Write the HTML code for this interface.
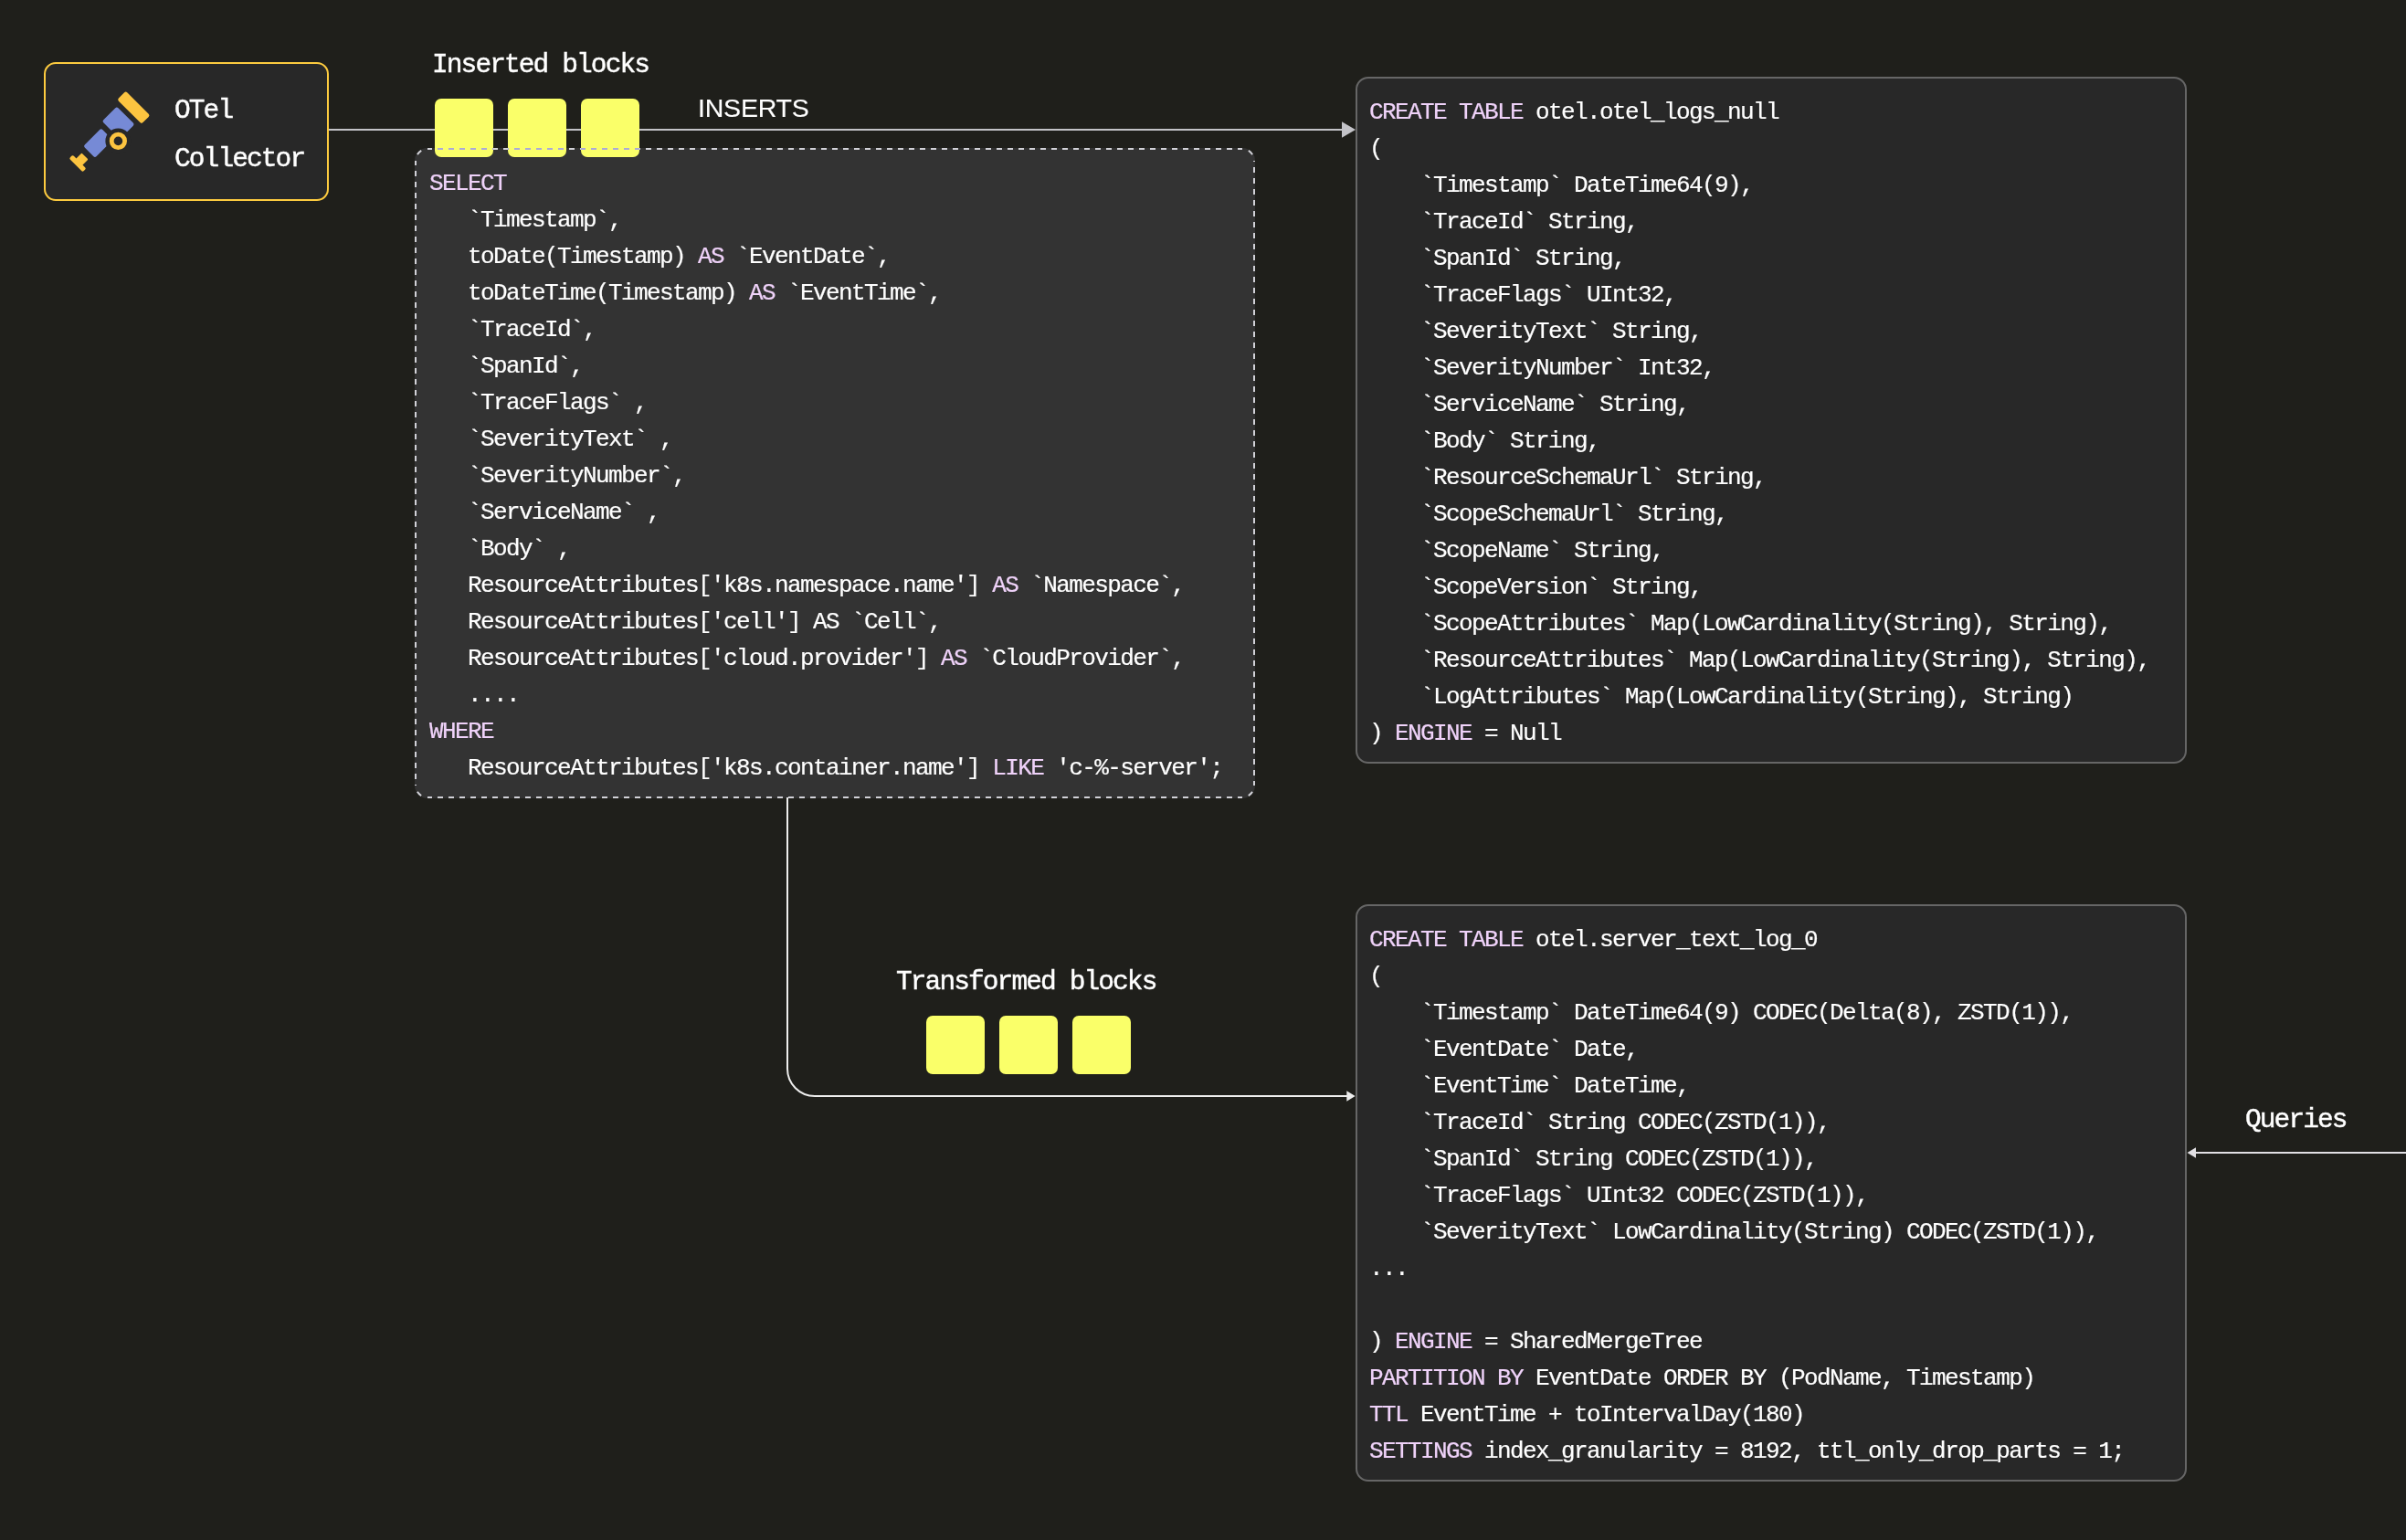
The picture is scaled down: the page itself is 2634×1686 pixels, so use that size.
<!DOCTYPE html>
<html><head><meta charset="utf-8">
<style>
html,body{margin:0;padding:0;}
body{width:2634px;height:1686px;background:#1f1f1b;position:relative;overflow:hidden;font-family:"Liberation Mono",monospace;color:#fff;}
svg{position:absolute;left:0;top:0;}
.lbl{position:absolute;font-family:"Liberation Mono",monospace;font-size:29.5px;letter-spacing:-1.9px;line-height:32px;white-space:pre;color:#fff;-webkit-text-stroke:0.45px #fff;}
.code{position:absolute;font-family:"Liberation Mono",monospace;font-size:26px;letter-spacing:-1.6px;line-height:40px;white-space:pre;color:#fff;-webkit-text-stroke:0.2px currentColor;}
.k{color:#efd2f9;}
.lbl,.code,.ins{will-change:transform;}
</style></head>
<body>
<svg width="2634" height="1686" viewBox="0 0 2634 1686">
  <defs>
    <clipPath id="sqclip">
      <rect x="476" y="108" width="64" height="64" rx="7"/>
      <rect x="556" y="108" width="64" height="64" rx="7"/>
      <rect x="636" y="108" width="64" height="64" rx="7"/>
    </clipPath>
  </defs>
  <!-- OTel collector box -->
  <rect x="49" y="69" width="310" height="150" rx="12" fill="#282828" stroke="#fdcb3f" stroke-width="2"/>
  <g transform="translate(70 95) rotate(-45)">
    <rect x="31.3" y="51.2" width="13.2" height="37.6" rx="2.2" fill="#fcc440"/>
    <rect x="2.8" y="56.2" width="22.8" height="27.6" rx="2.2" fill="#768ad6"/>
    <rect x="-31" y="61" width="27.6" height="18" rx="2.2" fill="#768ad6"/>
    <rect x="-51.5" y="59.5" width="5.5" height="21" rx="1.8" fill="#fcc440"/>
    <rect x="-48" y="65" width="10.5" height="10" rx="1" fill="#fcc440"/>
    <circle cx="0" cy="84" r="14" fill="#282828"/>
    <circle cx="0" cy="84" r="7.2" fill="none" stroke="#fcc440" stroke-width="4.8"/>
  </g>

  <!-- top insert line + arrow -->
  <rect x="360" y="141" width="1110" height="2" fill="#c3c3c8"/>
  <path d="M1469 133.2 L1484 142 L1469 150.8 Z" fill="#c3c3c8"/>

  <!-- Select code box -->
  <rect x="454" y="162" width="920" height="712" rx="14" fill="#333333"/>
  <rect x="476" y="108" width="64" height="64" rx="7" fill="#faff69"/>
  <rect x="556" y="108" width="64" height="64" rx="7" fill="#faff69"/>
  <rect x="636" y="108" width="64" height="64" rx="7" fill="#faff69"/>
  <g fill="none" stroke="#d2d2d8" stroke-width="2" stroke-dasharray="6 6" stroke-dashoffset="1">
    <path d="M468 163 H1360"/>
    <path d="M455 176 V860"/>
    <path d="M1373 860 V176"/>
    <path d="M1360 873 H468"/>
  </g>
  <g fill="none" stroke="#d2d2d8" stroke-width="2" stroke-dasharray="6 30" stroke-dashoffset="-7.2">
    <path d="M455 176 A13 13 0 0 1 468 163"/>
    <path d="M1360 163 A13 13 0 0 1 1373 176"/>
    <path d="M1373 860 A13 13 0 0 1 1360 873"/>
    <path d="M468 873 A13 13 0 0 1 455 860"/>
  </g>
  <path d="M468 163 H1360" fill="none" stroke="#aaaad8" stroke-width="2" stroke-dasharray="6 6" stroke-dashoffset="1" clip-path="url(#sqclip)"/>

  <!-- Tables -->
  <rect x="1485" y="85" width="908" height="750" rx="13" fill="#282828" stroke="#666666" stroke-width="2"/>
  <rect x="1485" y="991" width="908" height="630" rx="13" fill="#282828" stroke="#666666" stroke-width="2"/>

  <!-- connector -->
  <path d="M862 873 V1170 A30 30 0 0 0 892 1200 H1475" fill="none" stroke="#eeeeee" stroke-width="2"/>
  <path d="M1474.3 1194.2 L1483.6 1200 L1474.3 1205.8 Z" fill="#eeeeee"/>

  <!-- transformed squares -->
  <rect x="1014" y="1112" width="64" height="64" rx="7" fill="#faff69"/>
  <rect x="1094" y="1112" width="64" height="64" rx="7" fill="#faff69"/>
  <rect x="1174" y="1112" width="64" height="64" rx="7" fill="#faff69"/>

  <!-- queries arrow -->
  <rect x="2403" y="1261" width="231" height="2" fill="#e2e0e4"/>
  <path d="M2404 1256.3 L2394.5 1262 L2404 1267.7 Z" fill="#e2e0e4"/>
</svg>

<div class="lbl" style="left:191px;top:105px;">OTel</div>
<div class="lbl" style="left:191px;top:158px;">Collector</div>
<div class="lbl" style="left:473px;top:55px;">Inserted blocks</div>
<div class="ins" style="position:absolute;left:764px;top:102px;font-family:'Liberation Sans',sans-serif;font-size:28.5px;letter-spacing:-0.2px;line-height:32px;color:#fff;-webkit-text-stroke:0.15px #fff;">INSERTS</div>

<div class="code" style="left:470px;top:181px;"><span class="k">SELECT</span>
   `Timestamp`,
   toDate(Timestamp) <span class="k">AS</span> `EventDate`,
   toDateTime(Timestamp) <span class="k">AS</span> `EventTime`,
   `TraceId`,
   `SpanId`,
   `TraceFlags` ,
   `SeverityText` ,
   `SeverityNumber`,
   `ServiceName` ,
   `Body` ,
   ResourceAttributes['k8s.namespace.name'] <span class="k">AS</span> `Namespace`,
   ResourceAttributes['cell'] AS `Cell`,
   ResourceAttributes['cloud.provider'] <span class="k">AS</span> `CloudProvider`,
   ....
<span class="k">WHERE</span>
   ResourceAttributes['k8s.container.name'] <span class="k">LIKE</span> 'c-%-server';</div>

<div class="code" style="left:1499px;top:103px;"><span class="k">CREATE TABLE</span> otel.otel_logs_null
(
    `Timestamp` DateTime64(9),
    `TraceId` String,
    `SpanId` String,
    `TraceFlags` UInt32,
    `SeverityText` String,
    `SeverityNumber` Int32,
    `ServiceName` String,
    `Body` String,
    `ResourceSchemaUrl` String,
    `ScopeSchemaUrl` String,
    `ScopeName` String,
    `ScopeVersion` String,
    `ScopeAttributes` Map(LowCardinality(String), String),
    `ResourceAttributes` Map(LowCardinality(String), String),
    `LogAttributes` Map(LowCardinality(String), String)
) <span class="k">ENGINE</span> = Null</div>

<div class="lbl" style="left:981px;top:1059px;">Transformed blocks</div>

<div class="code" style="left:1499px;top:1009px;"><span class="k">CREATE TABLE</span> otel.server_text_log_0
(
    `Timestamp` DateTime64(9) CODEC(Delta(8), ZSTD(1)),
    `EventDate` Date,
    `EventTime` DateTime,
    `TraceId` String CODEC(ZSTD(1)),
    `SpanId` String CODEC(ZSTD(1)),
    `TraceFlags` UInt32 CODEC(ZSTD(1)),
    `SeverityText` LowCardinality(String) CODEC(ZSTD(1)),
...

) <span class="k">ENGINE</span> = SharedMergeTree
<span class="k">PARTITION BY</span> EventDate ORDER BY (PodName, Timestamp)
<span class="k">TTL</span> EventTime + toIntervalDay(180)
<span class="k">SETTINGS</span> index_granularity = 8192, ttl_only_drop_parts = 1;</div>

<div class="lbl" style="left:2458px;top:1210px;">Queries</div>
</body></html>
